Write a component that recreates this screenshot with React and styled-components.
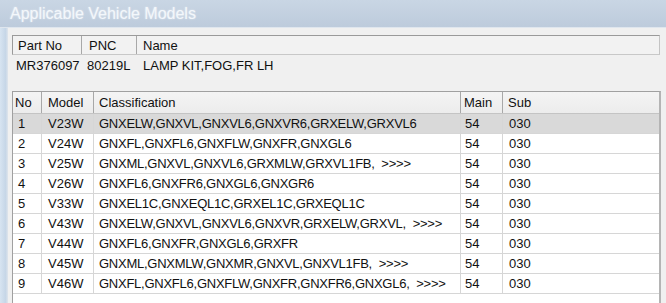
import React from 'react';
import styled, { createGlobalStyle } from 'styled-components';

const GlobalStyle = createGlobalStyle`
  html, body {
    margin: 0;
    padding: 0;
    background: #f0f0f0;
  }
  body {
    font-family: "Liberation Sans", Arial, sans-serif;
    color: #111;
  }
`;

const part = { partNo: 'MR376097', pnc: '80219L', name: 'LAMP KIT,FOG,FR LH' };

const models = [
  ['1', 'V23W', 'GNXELW,GNXVL,GNXVL6,GNXVR6,GRXELW,GRXVL6'],
  ['2', 'V24W', 'GNXFL,GNXFL6,GNXFLW,GNXFR,GNXGL6'],
  ['3', 'V25W', 'GNXML,GNXVL,GNXVL6,GRXMLW,GRXVL1FB,  >>>>'],
  ['4', 'V26W', 'GNXFL6,GNXFR6,GNXGL6,GNXGR6'],
  ['5', 'V33W', 'GNXEL1C,GNXEQL1C,GRXEL1C,GRXEQL1C'],
  ['6', 'V43W', 'GNXELW,GNXVL,GNXVL6,GNXVR,GRXELW,GRXVL,  >>>>'],
  ['7', 'V44W', 'GNXFL6,GNXFR,GNXGL6,GRXFR'],
  ['8', 'V45W', 'GNXML,GNXMLW,GNXMR,GNXVL,GNXVL1FB,  >>>>'],
  ['9', 'V46W', 'GNXFL,GNXFL6,GNXFLW,GNXFR,GNXFR6,GNXGL6,  >>>>'],
];

const Window = styled.div`
  width: 666px;
  height: 303px;
  overflow: hidden;
  display: flex;
  flex-direction: column;
`;

const TitleBar = styled.div`
  height: 27px;
  flex: none;
  display: flex;
  align-items: center;
  padding-left: 10px;
  background: linear-gradient(to bottom, #c9d6e4, #bdcbdc);
  border-bottom: 1px solid #dfe6ee;
  font-size: 16px;
  color: #f3f7fb;
  text-shadow: 0 0 2px rgba(255, 255, 255, 0.6);
`;

const Body = styled.div`
  flex: 1;
  display: flex;
  min-height: 0;
`;

const SideFrame = styled.div`
  width: 8px;
  flex: none;
  background: linear-gradient(to right, #d7e4f1, #c6d6e7 70%, #dfe5ec);
`;

const Content = styled.div`
  flex: 1;
  display: flex;
  flex-direction: column;
  padding: 7px 5px 0 4px;
  min-width: 0;
`;

const PartPanel = styled.div`
  height: 56px;
  flex: none;
`;

const PartHeader = styled.div`
  display: grid;
  grid-template-columns: 69px 55px 1fr;
  height: 18px;
  margin-right: 1px;
  border: 1px solid #9a9a9a;
  border-right-color: #c4c4c4;
  border-bottom-color: #c8c8c8;
  background: #f2f2f2;
`;

const HeadCell = styled.div`
  display: flex;
  align-items: center;
  padding-left: ${p => p.$pad || 5}px;
  font-size: 13px;
  white-space: pre;
  overflow: hidden;
  border-right: ${p => (p.$last ? 'none' : '1px solid #a8a8a8')};
`;

const PartRow = styled.div`
  display: grid;
  grid-template-columns: 69px 55px 1fr;
  height: 21px;
  padding-left: 1px;
`;

const PartCell = styled.div`
  display: flex;
  align-items: center;
  padding-left: ${p => p.$pad || 5}px;
  font-size: 13px;
  white-space: pre;
`;

const ModelTable = styled.div`
  flex: 1;
  background: #fff;
  border: 1px solid #a0a0a0;
  border-right: 2px solid #b4b4b4;
  border-bottom: none;
`;

const cols = '29px 52px 367px 42px 1fr';

const TableHeader = styled.div`
  display: grid;
  grid-template-columns: ${cols};
  height: 21px;
  background: linear-gradient(to bottom, #f4f4f4, #ececec);
  border-bottom: 1px solid #c4c4c4;
`;

const Row = styled.div`
  display: grid;
  grid-template-columns: ${cols};
  height: 19px;
  background: ${p => (p.$selected ? '#d9d9d9' : '#fff')};
  border-bottom: 1px solid #d6d6d6;
`;

const Cell = styled.div`
  display: flex;
  align-items: center;
  padding-left: ${p => p.$pad || 5}px;
  font-size: 13px;
  letter-spacing: ${p => (p.$tight ? '-0.25px' : '0')};
  white-space: pre;
  overflow: hidden;
  border-right: ${p => (p.$last ? 'none' : '1px solid #d6d6d6')};
`;

const App = () => {
  const rows = models.map((m, index) => (
    <Row key={m[0]} $selected={index === 0}>
      <Cell>{m[0]}</Cell>
      <Cell $pad={6}>{m[1]}</Cell>
      <Cell $tight>{m[2]}</Cell>
      <Cell $pad={4}>54</Cell>
      <Cell $pad={6} $last>030</Cell>
    </Row>
  ));

  return (
    <Window>
      <GlobalStyle />
      <TitleBar>Applicable Vehicle Models</TitleBar>
      <Body>
        <SideFrame />
        <Content>
          <PartPanel>
            <PartHeader>
              <HeadCell>Part No</HeadCell>
              <HeadCell $pad={7}>PNC</HeadCell>
              <HeadCell $pad={6} $last>Name</HeadCell>
            </PartHeader>
            <PartRow>
              <PartCell $pad={3}>{part.partNo}</PartCell>
              <PartCell $pad={5}>{part.pnc}</PartCell>
              <PartCell $pad={6}>{part.name}</PartCell>
            </PartRow>
          </PartPanel>
          <ModelTable>
            <TableHeader>
              <HeadCell $pad={2}>No</HeadCell>
              <HeadCell $pad={6}>Model</HeadCell>
              <HeadCell>Classification</HeadCell>
              <HeadCell $pad={3}>Main</HeadCell>
              <HeadCell $pad={5} $last>Sub</HeadCell>
            </TableHeader>
            {rows}
          </ModelTable>
        </Content>
      </Body>
    </Window>
  );
};

export default App;
